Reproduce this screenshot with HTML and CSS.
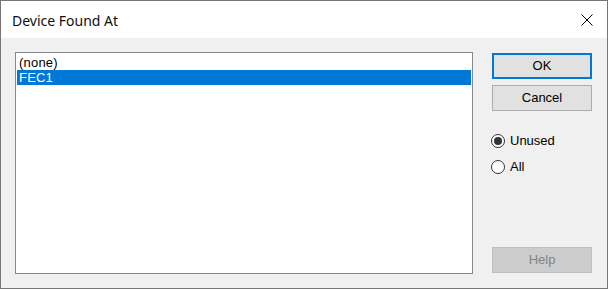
FILE: index.html
```html
<!DOCTYPE html>
<html>
<head>
<meta charset="utf-8">
<link rel="stylesheet" href="styles.css">
</head>
<body>
<div class="window">
  <div class="titlebar">
    <span class="title">Device Found At</span>
    <svg class="close" width="12" height="12" viewBox="0 0 12 12"><path d="M0.5 0.5 L11.5 11.5 M11.5 0.5 L0.5 11.5" stroke="#000" stroke-width="1" fill="none"/></svg>
  </div>
  <div class="content">
    <div class="listbox">
      <div class="row">(none)</div>
      <div class="row selected">FEC1</div>
    </div>
    <div class="side">
      <button class="btn default">OK</button>
      <button class="btn cancel">Cancel</button>
      <div class="radio first"><span class="circle checked"></span><span class="label">Unused</span></div>
      <div class="radio"><span class="circle"></span><span class="label">All</span></div>
      <button class="btn disabled help">Help</button>
    </div>
  </div>
</div>
</body>
</html>
```

FILE: styles.css
```css
html, body {
  margin: 0;
  padding: 0;
  background: #f0f0f0;
}
.window {
  width: 608px;
  height: 289px;
  box-sizing: border-box;
  border: 1px solid #777777;
  display: flex;
  flex-direction: column;
  font-family: "Liberation Sans", Arial, sans-serif;
  font-size: 13px;
  color: #000;
}
.titlebar {
  height: 37px;
  flex: none;
  background: #ffffff;
  display: flex;
  align-items: center;
  justify-content: space-between;
  padding: 0 14px 0 11px;
}
.title {
  font-family: "Noto Sans", sans-serif;
  font-size: 14px;
  color: #111;
  margin-top: 1px;
}
.close {
  display: block;
  margin-top: 1px;
}
.content {
  flex: 1;
  background: #f0f0f0;
  display: flex;
  padding: 14px 14px 14px 14px;
  gap: 19px;
}
.listbox {
  width: 458px;
  height: 222px;
  box-sizing: border-box;
  border: 1px solid #828790;
  background: #ffffff;
  padding: 2px 1px 0 1px;
}
.row {
  height: 15px;
  line-height: 15px;
  padding-left: 2px;
  white-space: nowrap;
  letter-spacing: 0.2px;
}
.row.selected {
  background: #0078d7;
  color: #ffffff;
}
.side {
  width: 100px;
  display: flex;
  flex-direction: column;
  padding-top: 1px;
}
.btn {
  width: 100px;
  height: 26px;
  box-sizing: border-box;
  font-family: "Liberation Sans", Arial, sans-serif;
  font-size: 13px;
  color: #000;
  background: #e1e1e1;
  border: 1px solid #adadad;
  padding: 0;
  margin: 0;
  line-height: 24px;
  text-align: center;
}
.btn.default {
  border: 2px solid #0078d7;
  line-height: 22px;
}
.cancel {
  margin-top: 6px;
}
.radio {
  display: flex;
  align-items: center;
  height: 14px;
  margin-top: 12px;
}
.radio.first {
  margin-top: 23px;
}
.circle {
  width: 14px;
  height: 14px;
  box-sizing: border-box;
  border: 1px solid #333333;
  border-radius: 50%;
  background: #ffffff;
  position: relative;
  flex: none;
  margin-left: -1px;
}
.circle.checked::after {
  content: "";
  position: absolute;
  left: 2px;
  top: 2px;
  width: 8px;
  height: 8px;
  border-radius: 50%;
  background: #333333;
}
.label {
  margin-left: 5px;
  line-height: 14px;
}
.help {
  margin-top: auto;
  margin-bottom: 1px;
  background: #cccccc;
  border-color: #bfbfbf;
  color: #838383;
}
```
